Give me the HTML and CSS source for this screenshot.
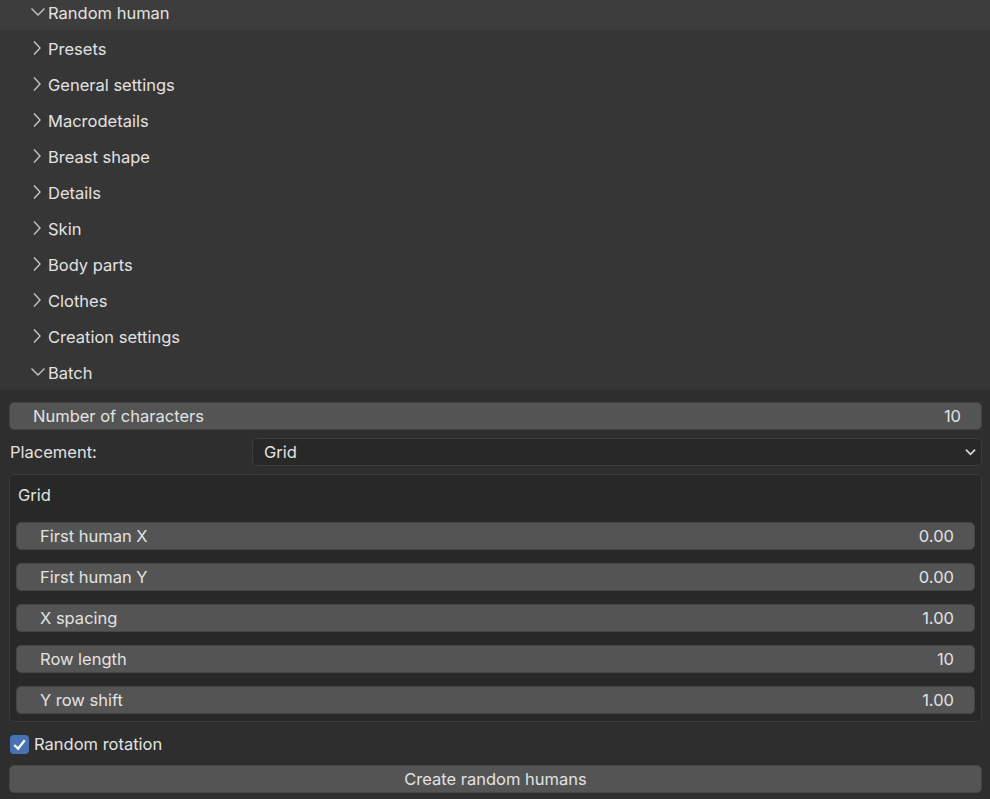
FILE: index.html
```html
<!DOCTYPE html>
<html lang="en">
<head>
    <meta charset="UTF-8">
    <meta name="viewport" content="width=device-width, initial-scale=1.0">
    <title>Random human</title>
    <link rel="stylesheet" href="styles.css">
</head>
<body>
    <div class="header open top">
        <svg class="chev" viewBox="0 0 16 10"><path d="M1.5 1.5 L8 8 L14.5 1.5"/></svg>
        <span>Random human</span>
    </div>
    <div class="subs">
        <div class="header"><svg class="chev" viewBox="0 0 10 16"><path d="M2 1.5 L8 8 L2 14.5"/></svg><span>Presets</span></div>
        <div class="header"><svg class="chev" viewBox="0 0 10 16"><path d="M2 1.5 L8 8 L2 14.5"/></svg><span>General settings</span></div>
        <div class="header"><svg class="chev" viewBox="0 0 10 16"><path d="M2 1.5 L8 8 L2 14.5"/></svg><span>Macrodetails</span></div>
        <div class="header"><svg class="chev" viewBox="0 0 10 16"><path d="M2 1.5 L8 8 L2 14.5"/></svg><span>Breast shape</span></div>
        <div class="header"><svg class="chev" viewBox="0 0 10 16"><path d="M2 1.5 L8 8 L2 14.5"/></svg><span>Details</span></div>
        <div class="header"><svg class="chev" viewBox="0 0 10 16"><path d="M2 1.5 L8 8 L2 14.5"/></svg><span>Skin</span></div>
        <div class="header"><svg class="chev" viewBox="0 0 10 16"><path d="M2 1.5 L8 8 L2 14.5"/></svg><span>Body parts</span></div>
        <div class="header"><svg class="chev" viewBox="0 0 10 16"><path d="M2 1.5 L8 8 L2 14.5"/></svg><span>Clothes</span></div>
        <div class="header"><svg class="chev" viewBox="0 0 10 16"><path d="M2 1.5 L8 8 L2 14.5"/></svg><span>Creation settings</span></div>
        <div class="header open"><svg class="chev" viewBox="0 0 16 10"><path d="M1.5 1.5 L8 8 L14.5 1.5"/></svg><span>Batch</span></div>
    </div>
    <div class="panel">
        <div class="field wide"><span>Number of characters</span><span>10</span></div>
        <div class="prop-row">
            <span class="prop-label">Placement:</span>
            <div class="dropdown">
                <span>Grid</span>
                <svg class="drop-chev" viewBox="0 0 12 8"><path d="M1 1.5 L6 6.5 L11 1.5"/></svg>
            </div>
        </div>
        <div class="box">
            <div class="box-title">Grid</div>
            <div class="field"><span>First human X</span><span>0.00</span></div>
            <div class="field"><span>First human Y</span><span>0.00</span></div>
            <div class="field"><span>X spacing</span><span>1.00</span></div>
            <div class="field"><span>Row length</span><span>10</span></div>
            <div class="field"><span>Y row shift</span><span>1.00</span></div>
        </div>
        <label class="check-row">
            <span class="check"><svg viewBox="0 0 20 20"><path d="M4.5 10.5 L8.5 14.5 L15.5 5.5"/></svg></span>
            <span>Random rotation</span>
        </label>
        <div class="button">Create random humans</div>
    </div>
</body>
</html>
```
FILE: styles.css
```css
body{
    margin: 0;
    background-color: #2e2e2e;
    font-family: Inter, "Noto Sans", sans-serif;
    font-size: 16.5px;
    color: #e2e2e2;
    width: 990px;
    height: 799px;
    overflow: hidden;
}
.header{
    display: flex;
    align-items: center;
    height: 36px;
    padding-left: 32px;
    background-color: #363636;
}
.header span{
    margin-left: 6px;
}
.top{
    height: 30px;
    padding-bottom: 4px;
    box-sizing: border-box;
    background-color: #3d3d3d;
}
.subs .header{
    padding-top: 2px;
    box-sizing: border-box;
}
.chev{
    width: 10px;
    height: 16px;
    fill: none;
    stroke: #c4c4c4;
    stroke-width: 1.4;
    margin-top: -2px;
}
.open .chev{
    width: 16px;
    height: 10px;
    margin-left: -2px;
    margin-top: -3px;
}
.open span{
    margin-left: 2px;
}
.panel{
    padding: 12px 8px 0 9px;
}
.field{
    display: flex;
    justify-content: space-between;
    align-items: center;
    height: 28px;
    box-sizing: border-box;
    background-color: #545454;
    border: 1px solid #464646;
    border-radius: 5px;
    padding: 0 20px 0 23px;
    margin-bottom: 13px;
}
.wide{
    margin-bottom: 8px;
}
.prop-row{
    display: flex;
    align-items: center;
    height: 28px;
    margin-bottom: 8px;
}
.prop-label{
    width: 242px;
    padding-left: 1px;
}
.dropdown{
    flex: 1;
    display: flex;
    justify-content: space-between;
    align-items: center;
    height: 28px;
    box-sizing: border-box;
    background-color: #282828;
    border: 1px solid #3d3d3d;
    border-radius: 5px;
    padding: 0 5px 0 11px;
}
.drop-chev{
    width: 11px;
    height: 8px;
    fill: none;
    stroke: #d8d8d8;
    stroke-width: 1.8;
}
.box{
    background-color: #282828;
    border: 1px solid #3a3a3a;
    border-radius: 5px;
    padding: 0 6px 0 6px;
    height: 248px;
    box-sizing: border-box;
}
.box-title{
    height: 40px;
    display: flex;
    align-items: center;
    padding-left: 2px;
    margin-bottom: 7px;
}
.check-row{
    display: flex;
    align-items: center;
    height: 28px;
    margin-top: 8px;
    margin-bottom: 7px;
}
.check{
    width: 19px;
    height: 19px;
    margin-left: 1px;
    margin-right: 5px;
    background-color: #4772b3;
    border-radius: 4px;
    display: flex;
}
.check svg{
    width: 19px;
    height: 19px;
    fill: none;
    stroke: #ffffff;
    stroke-width: 2.4;
}
.button{
    height: 28px;
    box-sizing: border-box;
    background-color: #545454;
    border: 1px solid #464646;
    border-radius: 5px;
    display: flex;
    justify-content: center;
    align-items: center;
}
```
